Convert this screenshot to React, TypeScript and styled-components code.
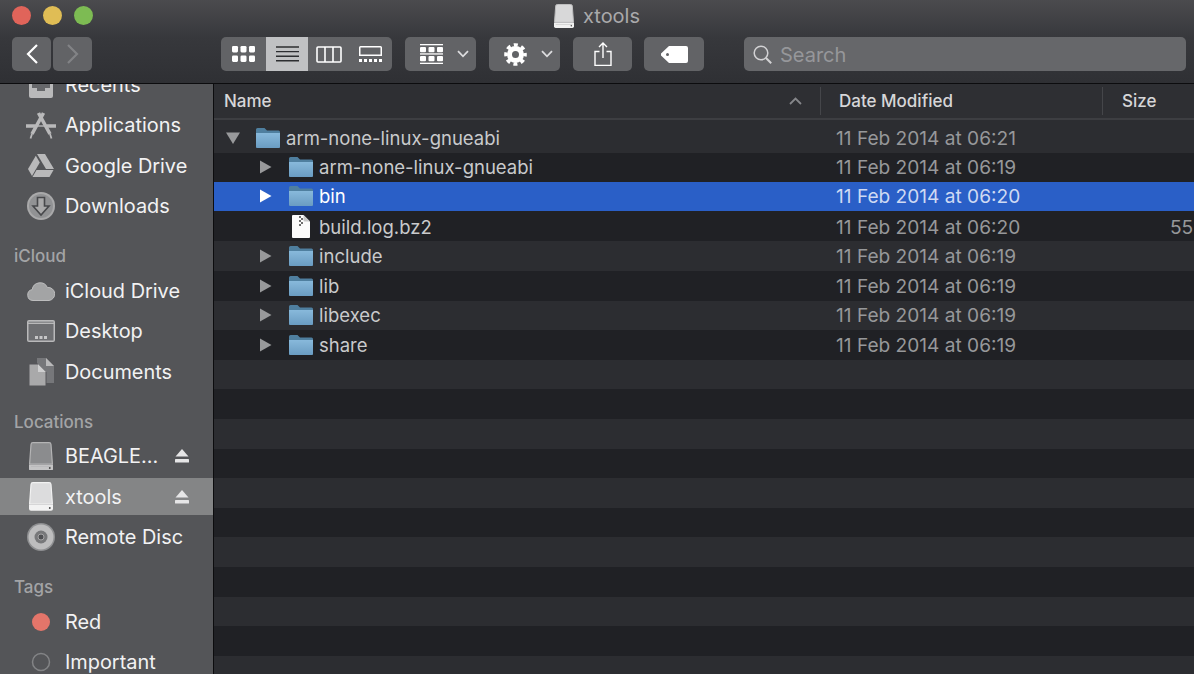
import React from "react";
import styled, { createGlobalStyle } from "styled-components";

const GlobalStyle = createGlobalStyle`
  html, body {
    margin: 0;
    padding: 0;
    background: #202125;
  }
  * {
    box-sizing: border-box;
  }
`;

const FONT = `Inter, "Liberation Sans", sans-serif`;

const Window = styled.div`
  width: 1194px;
  height: 674px;
  overflow: hidden;
  display: flex;
  flex-direction: column;
  font-family: ${FONT};
`;

const Toolbar = styled.header`
  height: 84px;
  flex: none;
  background: linear-gradient(#4b4b4e, #37383c 45%, #2f3034);
  border-bottom: 1px solid #0c0c0e;
`;

const TitleBar = styled.div`
  height: 37px;
  display: grid;
  grid-template-columns: 1fr auto 1fr;
  align-items: center;
  padding: 0 12px;
`;

const Lights = styled.div`
  display: flex;
  gap: 12px;
  margin-top: -7px;
`;

const Light = styled.span<{ $color: string }>`
  width: 19px;
  height: 19px;
  border-radius: 50%;
  background: ${(p) => p.$color};
`;

const Title = styled.div`
  display: flex;
  align-items: center;
  gap: 9px;
  margin-top: -6px;
  color: #a9a9ab;
  font-size: 20px;
`;

const Controls = styled.div`
  display: flex;
  height: 34px;
  padding: 0 8px 0 12px;
`;

const Pair = styled.div`
  display: flex;
  gap: 2px;
`;

const ToolButton = styled.div<{ $w: number; $left?: number; $active?: boolean; $flat?: boolean }>`
  width: ${(p) => p.$w}px;
  height: 34px;
  margin-left: ${(p) => p.$left ?? 0}px;
  display: flex;
  align-items: center;
  justify-content: center;
  background: ${(p) => (p.$active ? "#c0c1c3" : "#626366")};
  border-radius: ${(p) => (p.$flat ? "0" : "5px")};
`;

const MenuButton = styled(ToolButton)`
  justify-content: flex-start;
  padding-left: 15px;
  gap: 14px;
`;

const Segment = styled.div`
  display: flex;
  margin-left: 129px;
  border-radius: 5px;
  overflow: hidden;
`;

const Search = styled.div`
  width: 442px;
  height: 34px;
  margin-left: 40px;
  padding-left: 9px;
  display: flex;
  align-items: center;
  gap: 8px;
  border-radius: 5px;
  background: #66676a;
`;

const SearchText = styled.span`
  padding-top: 1px;
  color: #96979a;
  font-size: 20px;
`;

const Body = styled.div`
  flex: 1;
  min-height: 0;
  display: flex;
`;

const Sidebar = styled.aside`
  width: 214px;
  flex: none;
  overflow: hidden;
  background: #545558;
  border-right: 1px solid #0c0c0e;
`;

const SideList = styled.div`
  display: flex;
  flex-direction: column;
  gap: 3.5px;
  margin-top: -18px;
`;

const SideGroup = styled.div`
  display: flex;
  flex-direction: column;
  gap: 3.5px;
`;

const SideHeading = styled.div`
  height: 24px;
  margin: 16px 0 0.5px 14px;
  line-height: 24px;
  color: #a3a4a6;
  font-size: 17px;
  font-weight: 500;
`;

const SideItem = styled.div<{ $active?: boolean }>`
  height: 37px;
  flex: none;
  display: flex;
  align-items: center;
  padding: 0 24px 0 26px;
  background: ${(p) => (p.$active ? "#848586" : "transparent")};
  color: #f2f2f3;
  font-size: 19.9px;
`;

const SideIcon = styled.span`
  width: 30px;
  height: 30px;
  margin-right: 9px;
  flex: none;
  display: flex;
  align-items: center;
  justify-content: center;
`;

const SideLabel = styled.span`
  flex: 1;
  white-space: nowrap;
`;

const Main = styled.main`
  flex: 1;
  min-width: 0;
  overflow: hidden;
  background: #202125;
`;

const Header = styled.div`
  height: 36px;
  display: grid;
  grid-template-columns: 607px 282px 1fr;
  background: #2e2f33;
  border-bottom: 2px solid #3d3e42;
  color: #d6d6d8;
  font-size: 17px;
  font-weight: 500;
`;

const HeaderCell = styled.div<{ $pad: number; $divided?: boolean }>`
  height: 28px;
  margin-top: 3px;
  display: flex;
  align-items: center;
  justify-content: space-between;
  padding: 0 18px 0 ${(p) => p.$pad}px;
  border-right: ${(p) => (p.$divided ? "1.5px solid #45464a" : "none")};
`;

const Spacer = styled.div`
  height: 3px;
  background: #2c2d31;
`;

const Row = styled.div<{ $odd: boolean; $selected?: boolean }>`
  height: 29.6px;
  display: grid;
  grid-template-columns: 607px 1fr;
  align-items: center;
  background: ${(p) => (p.$selected ? "#2a5fc7" : p.$odd ? "#2c2d31" : "#202125")};
  border-bottom: ${(p) => (p.$selected ? "1.5px solid #202125" : "none")};
`;

const NameCell = styled.div<{ $level: number; $selected?: boolean }>`
  display: flex;
  align-items: center;
  padding-left: ${(p) => 12 + p.$level * 33}px;
  color: ${(p) => (p.$selected ? "#ffffff" : "#c9cacc")};
  font-size: 18.5px;
`;

const Disclosure = styled.span`
  width: 29px;
  height: 20px;
  flex: none;
  display: flex;
  align-items: center;
  justify-content: flex-start;
`;

const FileIcon = styled.span`
  width: 25px;
  height: 24px;
  margin-right: 6px;
  flex: none;
  display: flex;
  align-items: center;
  justify-content: center;
`;

const DateCell = styled.div<{ $selected?: boolean }>`
  position: relative;
  padding-left: 15px;
  color: ${(p) => (p.$selected ? "#cfdaf3" : "#97989a")};
  font-size: 19.1px;
  white-space: nowrap;
`;

const SizeText = styled.span`
  position: absolute;
  left: 349px;
  top: 0;
`;

const Chevron = () => (
  <svg width="12" height="8" viewBox="0 0 12 8" fill="none">
    <path d="M1 1.200 6 6.300 11 1.200" stroke="#dcdcde" strokeWidth="1.800" />
  </svg>
);

const NavArrow = ({ dir, color }: { dir: "l" | "r"; color: string }) => (
  <svg width="14" height="20" viewBox="0 0 14 20" fill="none">
    <path d={dir === "l" ? "M12 1 3 10l9 9" : "M2 1l9 9-9 9"} stroke={color} strokeWidth="2.2" />
  </svg>
);

const IconsView = () => (
  <svg width="23" height="16" viewBox="0 0 23 16" fill="#fff">
    {[0, 8.5, 17].flatMap((x) =>
      [0, 9.5].map((y) => <rect key={`${x}-${y}`} x={x} y={y} width="6" height="6.4" rx="1.3" />),
    )}
  </svg>
);

const ListView = () => (
  <svg width="23" height="16" viewBox="0 0 23 16" stroke="#2d2e31" strokeWidth="1.400">
    <path d="M0 1h23M0 5.600h23M0 10.200h23M0 14.800h23" />
  </svg>
);

const ColumnView = () => (
  <svg width="26" height="17" viewBox="0 0 26 17" fill="none" stroke="#fff" strokeWidth="1.600">
    <rect x="1" y="1" width="24" height="15" rx="1" />
    <path d="M9 1v15M17 1v15" />
  </svg>
);

const GalleryView = () => (
  <svg width="23" height="16" viewBox="0 0 23 16" fill="#fff">
    <path d="M1.500 0h20A1.500 1.500 0 0 1 23 1.500V10H0V1.500A1.500 1.500 0 0 1 1.500 0Zm0 1.500V8.600h20V1.500Z" fillRule="evenodd" />
    <path d="M0 13h3v3H0zM5 13h3v3H5zM10 13h3v3h-3zM15 13h3v3h-3zM20 13h3v3h-3z" />
  </svg>
);

const GroupIcon = () => (
  <svg width="23" height="20" viewBox="0 0 23 20" fill="#fff">
    <rect y="0" width="23" height="1.300" />
    <rect y="9.300" width="23" height="1.300" />
    <rect y="18.700" width="23" height="1.300" />
    {[0, 8.5, 17].flatMap((x) =>
      [3, 12].map((y) => <rect key={`${x}-${y}`} x={x} y={y} width="6" height="5.200" rx="1" />),
    )}
  </svg>
);

const Gear = () => (
  <svg width="23" height="23" viewBox="0 0 23 23" fill="none" stroke="#fff">
    <circle cx="11.500" cy="11.500" r="6" strokeWidth="5" />
    <circle cx="11.500" cy="11.500" r="9.600" strokeWidth="3.400" strokeDasharray="4 3.540" strokeDashoffset="2" />
  </svg>
);

const ShareIcon = () => (
  <svg width="18" height="24" viewBox="0 0 18 24" fill="none" stroke="#fff" strokeWidth="1.400">
    <path d="M5.500 9.500H1v14h16v-14h-4.500M9 16V1M5 5l4-4 4 4" />
  </svg>
);

const TagIcon = () => (
  <svg width="27" height="17" viewBox="0 0 27 17">
    <path
      fill="#fff"
      fillRule="evenodd"
      d="M8 0h17a2 2 0 0 1 2 2v13a2 2 0 0 1-2 2H8L0 9.500V7.500ZM6.500 7a1.500 1.500 0 1 0 0 3 1.500 1.500 0 0 0 0-3Z"
    />
  </svg>
);

const Magnifier = () => (
  <svg width="19" height="19" viewBox="0 0 19 19" fill="none" stroke="#d2d2d4" strokeWidth="1.500">
    <circle cx="8" cy="8" r="6.800" />
    <path d="m13 13 5.200 5.200" strokeWidth="2" />
  </svg>
);

const DriveIcon = ({ body, front, edge, size = 24 }: { body: string; front: string; edge: string; size?: number }) => (
  <svg width={size} height={size * 1.200} viewBox="0 0 24 28.800">
    <path d="M4 .6h16a2 2 0 0 1 2 1.900L23.400 22H.6L2 2.500A2 2 0 0 1 4 .6Z" fill={body} stroke={edge} strokeWidth="1.200" />
    <path d="M0 22.500h24v4.300a2 2 0 0 1-2 2H2a2 2 0 0 1-2-2Z" fill={front} />
    <rect x="2" y="24" width="20" height="1" fill={edge} opacity="0.600" />
    <circle cx="20.800" cy="26" r="0.900" fill="#444" />
  </svg>
);

const GREY = "#b9b9ba";

const TrayIcon = () => (
  <svg width="24" height="26" viewBox="0 0 24 26">
    <path d="M3 2h18l3 6v16a2 2 0 0 1-2 2H2a2 2 0 0 1-2-2V8Z" fill={GREY} />
    <path d="M3 11h18v5h-5v3H8v-3H3Z" fill="#66676a" />
  </svg>
);

const AppsIcon = () => (
  <svg width="30" height="27" viewBox="0 0 30 27" fill="none" stroke={GREY}>
    <path d="M0 14h9.500M20.500 14H30" strokeWidth="3.400" />
    <path d="M10 14h10" strokeWidth="1.400" />
    <path d="M17.500 1 6 22M12.500 1 24 22" strokeWidth="3.600" />
    <path d="M4.500 26.500 6 22M25.500 26.500 24 22" strokeWidth="1.800" />
  </svg>
);

const GoogleDriveIcon = () => (
  <svg width="26" height="23" viewBox="0 0 26 23" fill={GREY}>
    <path d="M9 0h8l9 15h-8Z" />
    <path d="M7.800 1.800 11.800 8.600 4 22 0 15Z" />
    <path d="M8.500 16h17l-4 7H4.500Z" />
  </svg>
);

const DownloadsIcon = () => (
  <svg width="28" height="28" viewBox="0 0 28 28">
    <circle cx="14" cy="14" r="14" fill="#a9a9aa" />
    <circle cx="14" cy="14" r="12" fill="#919294" />
    <path d="M10.500 5.500h7v8.500H22l-8 9-8-9h4.500Z" fill="#a9a9aa" stroke="#47484b" strokeWidth="1.600" />
  </svg>
);

const CloudIcon = () => (
  <svg width="28" height="20" viewBox="0 0 28 20" fill="#a3a4a5" stroke="#bdbdbe">
    <path d="M6 19.500a5.500 5.500 0 0 1-.8-10.900A8 8 0 0 1 20.400 6.500 6.500 6.500 0 0 1 22 19.500Z" />
  </svg>
);

const DesktopIcon = () => (
  <svg width="28" height="22" viewBox="0 0 28 22">
    <rect width="28" height="22" rx="2" fill={GREY} />
    <rect x="1.500" y="4" width="25" height="16.500" fill="#6e6f72" />
    <rect x="1.500" y="1.500" width="25" height="1.500" fill="#8a8b8d" />
    <path d="M8 16h3v3H8zM12.500 16h3v3h-3zM17 16h3v3h-3z" fill="#c6c6c7" />
  </svg>
);

const DocumentsIcon = () => (
  <svg width="25" height="28" viewBox="0 0 25 28">
    <path d="M8 0h9l8 8v17H8Z" fill="#76777a" />
    <path d="M17 0l8 8h-8Z" fill={GREY} />
    <path d="M0 6h9l8 8v14H0Z" fill="#a9a9aa" stroke="#545558" strokeWidth="1" />
    <path d="M9 6l8 8H9Z" fill="#cfcfd0" />
  </svg>
);

const DiscIcon = () => (
  <svg width="28" height="28" viewBox="0 0 28 28">
    <circle cx="14" cy="14" r="14" fill="#8f9092" />
    <circle cx="14" cy="14" r="12.500" fill="#bdbdbe" />
    <circle cx="14" cy="14" r="6.500" fill="#77787a" />
    <circle cx="14" cy="14" r="3" fill="#4f5053" stroke="#a5a5a6" />
  </svg>
);

const EjectIcon = () => (
  <svg width="14" height="14" viewBox="0 0 14 14" fill="#e6e6e7">
    <path d="M7 0l6.500 7.600H.5Z" />
    <rect y="10" width="14" height="3.600" rx="0.600" />
  </svg>
);

const TagDot = ({ hollow }: { hollow?: boolean }) => (
  <svg width="20" height="20" viewBox="0 0 20 20">
    <circle
      cx="10"
      cy="10"
      r={hollow ? 8.500 : 9}
      fill={hollow ? "none" : "#e4756a"}
      stroke={hollow ? "#838486" : "none"}
      strokeWidth="1.500"
    />
  </svg>
);

const Triangle = ({ open, color }: { open?: boolean; color: string }) => (
  <svg width="14" height="14" viewBox="0 0 14 14" fill={color}>
    <path d={open ? "M0 1.500h14L7 13Z" : "M1 .5 12.500 7 1 13.500Z"} />
  </svg>
);

const FolderIcon = ({ id }: { id: number }) => (
  <svg width="24" height="20" viewBox="0 0 24 20">
    <defs>
      <linearGradient id={`folder-${id}`} x1="0" y1="0" x2="0" y2="1">
        <stop offset="0" stopColor="#88b9db" />
        <stop offset="1" stopColor="#6a9cc2" />
      </linearGradient>
    </defs>
    <path d="M1.500 0h7L11 2.500h11.500A1.500 1.500 0 0 1 24 4v14.500a1.500 1.500 0 0 1-1.500 1.500h-21A1.500 1.500 0 0 1 0 18.500V1.500A1.500 1.500 0 0 1 1.500 0Z" fill="#4f7f9f" />
    <path d="M0 5h24v13.500a1.500 1.500 0 0 1-1.500 1.500h-21A1.500 1.500 0 0 1 0 18.500Z" fill={`url(#folder-${id})`} />
  </svg>
);

const ZipIcon = () => (
  <svg width="18" height="23" viewBox="0 0 18 23">
    <path d="M1 0h10.500L18 6.500V22a1 1 0 0 1-1 1H1a1 1 0 0 1-1-1V1a1 1 0 0 1 1-1Z" fill="#fbfbfb" />
    <path d="M11.500 0 18 6.500h-5.500a1 1 0 0 1-1-1Z" fill="#c9c9c9" />
    <path d="M7 1h2v2H7zM9 3h2v2H9zM7 5h2v2H7zM9 7h2v2H9zM7 9h2v2H7z" fill="#6d6d6d" />
  </svg>
);

type FileRow = {
  name: string;
  level: number;
  date: string;
  open?: boolean;
  file?: boolean;
  selected?: boolean;
  size?: string;
};

const files: FileRow[] = [
  { name: "arm-none-linux-gnueabi", level: 0, date: "11 Feb 2014 at 06:21", open: true },
  { name: "arm-none-linux-gnueabi", level: 1, date: "11 Feb 2014 at 06:19" },
  { name: "bin", level: 1, date: "11 Feb 2014 at 06:20", selected: true },
  { name: "build.log.bz2", level: 1, date: "11 Feb 2014 at 06:20", file: true, size: "55" },
  { name: "include", level: 1, date: "11 Feb 2014 at 06:19" },
  { name: "lib", level: 1, date: "11 Feb 2014 at 06:19" },
  { name: "libexec", level: 1, date: "11 Feb 2014 at 06:19" },
  { name: "share", level: 1, date: "11 Feb 2014 at 06:19" },
];

const emptyRows = Array.from({ length: 11 }, (_, i) => i + files.length);

export default function App() {
  return (
    <Window>
      <GlobalStyle />
      <Toolbar>
        <TitleBar>
          <Lights>
            <Light $color="#e0645a" />
            <Light $color="#e0bd55" />
            <Light $color="#7dbb53" />
          </Lights>
          <Title>
            <DriveIcon size={20} body="#d8d8d9" front="#f1f1f1" edge="#bdbdbe" />
            xtools
          </Title>
        </TitleBar>
        <Controls>
          <Pair>
            <ToolButton $w={39}>
              <NavArrow dir="l" color="#ffffff" />
            </ToolButton>
            <ToolButton $w={39}>
              <NavArrow dir="r" color="#828386" />
            </ToolButton>
          </Pair>
          <Segment>
            <ToolButton $w={45} $flat>
              <IconsView />
            </ToolButton>
            <ToolButton $w={42} $flat $active>
              <ListView />
            </ToolButton>
            <ToolButton $w={41} $flat>
              <ColumnView />
            </ToolButton>
            <ToolButton $w={43} $flat>
              <GalleryView />
            </ToolButton>
          </Segment>
          <MenuButton $w={71} $left={13}>
            <GroupIcon />
            <Chevron />
          </MenuButton>
          <MenuButton $w={71} $left={13}>
            <Gear />
            <Chevron />
          </MenuButton>
          <ToolButton $w={59} $left={13}>
            <ShareIcon />
          </ToolButton>
          <ToolButton $w={60} $left={12}>
            <TagIcon />
          </ToolButton>
          <Search>
            <Magnifier />
            <SearchText>Search</SearchText>
          </Search>
        </Controls>
      </Toolbar>
      <Body>
        <Sidebar>
          <SideList>
            <SideItem>
              <SideIcon><TrayIcon /></SideIcon>
              <SideLabel>Recents</SideLabel>
            </SideItem>
            <SideItem>
              <SideIcon><AppsIcon /></SideIcon>
              <SideLabel>Applications</SideLabel>
            </SideItem>
            <SideItem>
              <SideIcon><GoogleDriveIcon /></SideIcon>
              <SideLabel>Google Drive</SideLabel>
            </SideItem>
            <SideItem>
              <SideIcon><DownloadsIcon /></SideIcon>
              <SideLabel>Downloads</SideLabel>
            </SideItem>
            <SideHeading>iCloud</SideHeading>
            <SideGroup>
              <SideItem>
                <SideIcon><CloudIcon /></SideIcon>
                <SideLabel>iCloud Drive</SideLabel>
              </SideItem>
              <SideItem>
                <SideIcon><DesktopIcon /></SideIcon>
                <SideLabel>Desktop</SideLabel>
              </SideItem>
              <SideItem>
                <SideIcon><DocumentsIcon /></SideIcon>
                <SideLabel>Documents</SideLabel>
              </SideItem>
            </SideGroup>
            <SideHeading>Locations</SideHeading>
            <SideGroup>
              <SideItem>
                <SideIcon><DriveIcon body="#8b8c8e" front="#c4c4c5" edge="#b4b4b5" /></SideIcon>
                <SideLabel>BEAGLE...</SideLabel>
                <EjectIcon />
              </SideItem>
              <SideItem $active>
                <SideIcon><DriveIcon body="#dcdcdd" front="#f2f2f2" edge="#f2f2f2" /></SideIcon>
                <SideLabel>xtools</SideLabel>
                <EjectIcon />
              </SideItem>
              <SideItem>
                <SideIcon><DiscIcon /></SideIcon>
                <SideLabel>Remote Disc</SideLabel>
              </SideItem>
            </SideGroup>
            <SideHeading>Tags</SideHeading>
            <SideGroup>
              <SideItem>
                <SideIcon><TagDot /></SideIcon>
                <SideLabel>Red</SideLabel>
              </SideItem>
              <SideItem>
                <SideIcon><TagDot hollow /></SideIcon>
                <SideLabel>Important</SideLabel>
              </SideItem>
            </SideGroup>
          </SideList>
        </Sidebar>
        <Main>
          <Header>
            <HeaderCell $pad={10} $divided>
              Name
              <svg width="13" height="8" viewBox="0 0 13 8" fill="none">
                <path d="M1 7 6.500 1.500 12 7" stroke="#85868a" strokeWidth="1.800" />
              </svg>
            </HeaderCell>
            <HeaderCell $pad={18} $divided>Date Modified</HeaderCell>
            <HeaderCell $pad={19}>Size</HeaderCell>
          </Header>
          <Spacer />
          {files.map((f, i) => (
            <Row key={i} $odd={i % 2 === 0} $selected={f.selected}>
              <NameCell $level={f.level} $selected={f.selected}>
                <Disclosure>
                  {!f.file && (
                    <Triangle open={f.open} color={f.selected ? "#ffffff" : "#98999b"} />
                  )}
                </Disclosure>
                <FileIcon>{f.file ? <ZipIcon /> : <FolderIcon id={i} />}</FileIcon>
                {f.name}
              </NameCell>
              <DateCell $selected={f.selected}>
                {f.date}
                {f.size && <SizeText>{f.size}</SizeText>}
              </DateCell>
            </Row>
          ))}
          {emptyRows.map((i) => (
            <Row key={i} $odd={i % 2 === 0} />
          ))}
        </Main>
      </Body>
    </Window>
  );
}
